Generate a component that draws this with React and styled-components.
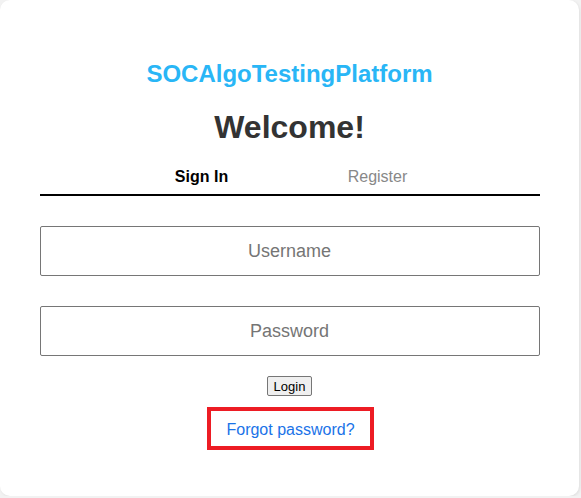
import React from "react"
import styled, { createGlobalStyle } from "styled-components"

const GlobalStyle = createGlobalStyle`
  body {
    margin: 0;
    background: #f2f2f2;
    font-family: "Liberation Sans", Arial, sans-serif;
  }
`

const Card = styled("div")`
  box-sizing: border-box;
  width: 579px;
  height: 496px;
  background: #fff;
  border-radius: 10px;
  box-shadow: 1px 1px 3px rgba(0, 0, 0, 0.08);
  padding: 60px 40px 0;
  display: flex;
  flex-direction: column;
  align-items: center;
`

const Brand = styled("h2")`
  margin: 0;
  font-size: 24px;
  line-height: 28px;
  font-weight: bold;
  color: #29b6f6;
`

const Heading = styled("h1")`
  margin: 21px 0 0;
  font-size: 32px;
  line-height: 37px;
  font-weight: bold;
  color: #333;
`

const Tabs = styled("div")`
  margin-top: 22px;
  width: 500px;
  display: flex;
  justify-content: center;
  border-bottom: 2px solid #000;
`

const Tab = styled("div")`
  width: 176px;
  text-align: center;
  font-size: 16px;
  line-height: 18px;
  padding-bottom: 8px;
  font-weight: ${(p) => (p.active ? "bold" : "normal")};
  color: ${(p) => (p.active ? "#000" : "#888")};
`

const Form = styled("form")`
  width: 500px;
  margin-top: 30px;
  display: flex;
  flex-direction: column;
  align-items: center;
`

const Input = styled("input")`
  box-sizing: border-box;
  width: 500px;
  height: 50px;
  margin-bottom: ${(p) => p.gap}px;
  border: 1px solid #767676;
  border-radius: 2px;
  font-family: "Liberation Sans", Arial, sans-serif;
  font-size: 18px;
  text-align: center;
  &::placeholder {
    color: #757575;
  }
`

const LoginButton = styled("button")`
  font-family: "Liberation Sans", Arial, sans-serif;
  font-size: 13px;
  padding: 1px 6px;
  height: 20px;
  background: #efefef;
  border: 1px solid #767676;
  border-radius: 2px;
  color: #000;
`

const Highlight = styled("div")`
  margin-top: 11px;
  margin-left: 2px;
  box-sizing: border-box;
  width: 167px;
  height: 43px;
  padding-top: 3px;
  border: 4px solid #ed1c24;
  display: flex;
  align-items: center;
  justify-content: center;
`

const ForgotLink = styled("a")`
  font-size: 16px;
  color: #1a73e8;
  text-decoration: none;
`

export default function App() {
  return (
    <>
      <GlobalStyle />
      <Card>
        <Brand>SOCAlgoTestingPlatform</Brand>
        <Heading>Welcome!</Heading>
        <Tabs>
          <Tab active>Sign In</Tab>
          <Tab>Register</Tab>
        </Tabs>
        <Form onSubmit={(e) => e.preventDefault()}>
          <Input gap={30} placeholder="Username" />
          <Input gap={20} type="password" placeholder="Password" />
          <LoginButton type="submit">Login</LoginButton>
          <Highlight>
            <ForgotLink href="#">Forgot password?</ForgotLink>
          </Highlight>
        </Form>
      </Card>
    </>
  )
}
